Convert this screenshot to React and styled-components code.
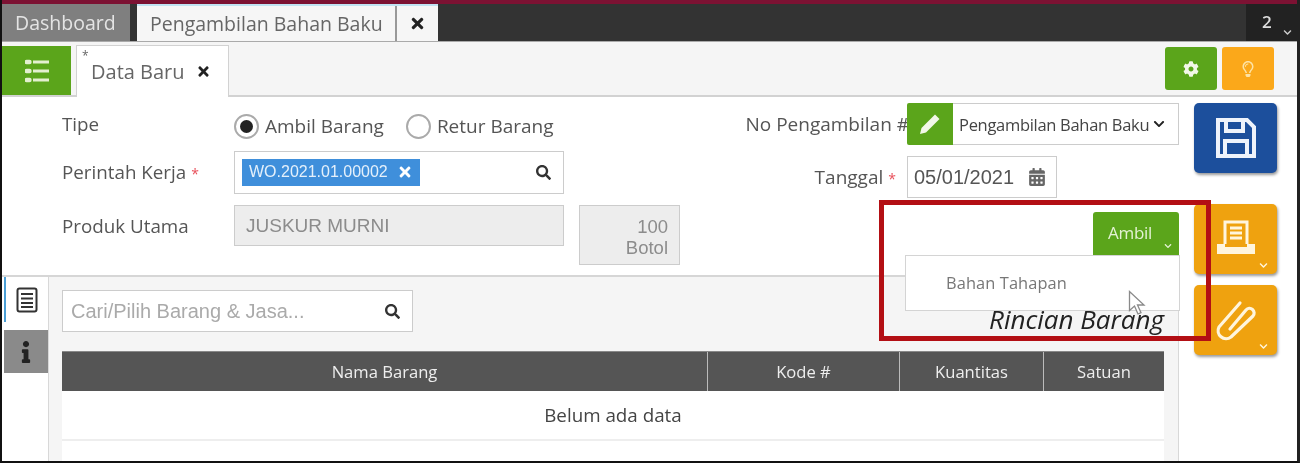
import React from 'react';
import styled, { createGlobalStyle } from 'styled-components';
import { FaTimes, FaCog, FaRegLightbulb, FaSearch, FaCalendarAlt, FaChevronDown, FaInfo } from 'react-icons/fa';

const GlobalStyle = createGlobalStyle`
  html, body { margin: 0; padding: 0; background: #fff; }
  * { box-sizing: border-box; }
`;

const Frame = styled.div`
  position: relative;
  width: 1300px;
  height: 463px;
  overflow: hidden;
  background: #fff;
  border-left: 2px solid #111;
  border-right: 3px solid #222;
  border-bottom: 2px solid #111;
  font-family: "Open Sans", "Noto Sans", sans-serif;
  color: #555;
  filter: blur(0.6px);
`;

const TopStrip = styled.div`
  height: 4px;
  background: #7c1233;
`;

const TabBar = styled.div`
  display: flex;
  height: 38px;
  background: #333;
  border-bottom: 1px solid #aaa;
`;

const DashTab = styled.div`
  width: 128px;
  background: #7f7f7f;
  color: #e4e4e4;
  font-size: 19.500px;
  padding: 5px 0 0 13px;
  white-space: nowrap;
`;

const PageTab = styled.div`
  display: flex;
  margin-left: 7px;
  background: #f6f6f6;
  border-top: 2px solid #bfe3f2;
`;

const PageTabTitle = styled.div`
  width: 260px;
  padding: 4px 0 0 13px;
  font-size: 19.500px;
  color: #666;
  border-right: 2px solid #999;
  white-space: nowrap;
`;

const PageTabClose = styled.div`
  width: 41px;
  display: flex;
  align-items: center;
  justify-content: center;
  color: #222;
  font-size: 17px;
`;

const Counter = styled.div`
  margin-left: auto;
  width: 51px;
  background: #222;
  color: #ddd;
  font-size: 17px;
  font-weight: 600;
  padding: 6px 0 0 16px;
  position: relative;
`;

const CounterCaret = styled.span`
  position: absolute;
  right: 5px;
  bottom: 1px;
  font-size: 9px;
  color: #ccc;
`;

const Toolbar = styled.div`
  display: flex;
  align-items: flex-end;
  height: 55px;
  background: #f5f5f5;
  border-bottom: 2px solid #d2d2d2;
`;

const MenuButton = styled.div`
  width: 69px;
  height: 49px;
  background: #5ba51b;
  display: flex;
  align-items: center;
  justify-content: center;
`;

const DocTab = styled.div`
  position: relative;
  display: flex;
  align-items: center;
  width: 153px;
  height: 52px;
  margin: 0 0 -2px 5px;
  padding: 0 0 0 14px;
  gap: 11px;
  background: #fff;
  border: 1px solid #d2d2d2;
  border-bottom: none;
  font-size: 20px;
  color: #666;
  white-space: nowrap;
`;

const DocStar = styled.span`
  position: absolute;
  left: 5px;
  top: 1px;
  font-size: 12px;
`;

const DocClose = styled.span`
  display: flex;
  color: #222;
  font-size: 15px;
`;

const ToolActions = styled.div`
  display: flex;
  gap: 5px;
  margin: 0 23px 5px auto;
`;

const ToolButton = styled.div`
  width: 52px;
  height: 43px;
  border-radius: 3px;
  background: ${p => p.$bg};
  color: ${p => p.$fg};
  font-size: 16px;
  display: flex;
  align-items: center;
  justify-content: center;
`;

const Body = styled.div`
  display: flex;
  height: 364px;
`;

const Main = styled.div`
  width: 1177px;
  display: flex;
  flex-direction: column;
`;

const Form = styled.div`
  height: 178px;
  flex: none;
  display: flex;
  justify-content: space-between;
  padding: 6px 0 0 60px;
`;

const FormLeft = styled.div`
  width: 620px;
  display: flex;
  flex-direction: column;
`;

const FormRow = styled.div`
  display: flex;
  align-items: ${p => p.$top ? 'flex-start' : 'center'};
  height: ${p => p.$h}px;
  margin-bottom: ${p => p.$mb || 0}px;
`;

const Label = styled.div`
  width: 172px;
  flex: none;
  font-size: 18.800px;
  color: #555;
  white-space: nowrap;
  ${p => p.$pt !== undefined && `padding-top: ${p.$pt}px;`}
  ${p => p.$pb && `padding-bottom: ${p.$pb}px;`}
`;

const Req = styled.span`
  color: #e8505b;
  font-size: 14px;
  margin-left: 5px;
`;

const RadioGroup = styled.label`
  display: flex;
  align-items: center;
  gap: 6px;
  font-size: 19px;
  color: #555;
  margin-right: 22px;
  white-space: nowrap;
`;

const RadioDot = styled.span`
  width: 25px;
  height: 25px;
  border-radius: 50%;
  background: #fff;
  border: 2px solid #aaa;
  display: flex;
  align-items: center;
  justify-content: center;
  &::after {
    content: '';
    width: 13px;
    height: 13px;
    border-radius: 50%;
    background: ${p => p.$on ? '#222' : 'transparent'};
  }
`;

const InputBox = styled.div`
  display: flex;
  align-items: center;
  width: ${p => p.$w}px;
  height: ${p => p.$h}px;
  border: 1px solid #ccc;
  background: ${p => p.$muted ? '#ededed' : '#fff'};
  color: ${p => p.$muted ? '#8c8c8c' : '#555'};
  font-family: "Liberation Sans", Arial, sans-serif;
  font-size: 19px;
  padding: ${p => p.$pad || '0 11px'};
  flex: none;
`;

const Chip = styled.div`
  display: flex;
  align-items: center;
  gap: 9px;
  height: 27px;
  padding: 0 7px;
  background: #3f8fdb;
  color: #e4f0fb;
  font-size: 16px;
  white-space: nowrap;
`;

const ChipClose = styled.span`
  display: flex;
  font-size: 16px;
  color: #fff;
`;

const SearchIcon = styled.span`
  display: flex;
  margin-left: auto;
  font-size: 15px;
  color: #333;
`;

const QtyBox = styled.div`
  width: 101px;
  height: 60px;
  margin-left: 15px;
  padding: 10px 11px 0 0;
  border: 1px solid #ccc;
  background: #ededed;
  color: #8c8c8c;
  font-family: "Liberation Sans", Arial, sans-serif;
  font-size: 18.500px;
  line-height: 21px;
  text-align: right;
`;

const FormRight = styled.div`
  position: relative;
  width: 445px;
  display: flex;
  flex-direction: column;
  align-items: flex-end;
`;

const RightRow = styled.div`
  display: flex;
  align-items: center;
  width: 100%;
  justify-content: flex-end;
  margin-bottom: ${p => p.$mb || 0}px;
`;

const RightLabel = styled.div`
  font-size: 19px;
  color: #555;
  white-space: nowrap;
  margin-right: ${p => p.$mr || 0}px;
`;

const EditButton = styled.div`
  width: 46px;
  height: 42px;
  margin-left: -2px;
  flex: none;
  border-radius: 2px 0 0 2px;
  background: #5ba51b;
  display: flex;
  align-items: center;
  justify-content: center;
`;

const SelectBox = styled.div`
  display: flex;
  align-items: center;
  gap: 4px;
  width: 226px;
  height: 42px;
  padding-left: 6px;
  border: 1px solid #ccc;
  border-left: none;
  background: #fff;
  font-size: 16.500px;
  letter-spacing: -0.3px;
  color: #444;
  white-space: nowrap;
`;

const SelectCaret = styled.span`
  display: flex;
  font-size: 12px;
  color: #222;
`;

const DateBox = styled.div`
  display: flex;
  align-items: center;
  gap: 14px;
  width: 150px;
  height: 42px;
  margin-right: 122px;
  padding-left: 6px;
  border: 1px solid #ccc;
  background: #fff;
  font-family: "Liberation Sans", Arial, sans-serif;
  font-size: 20px;
  color: #555;
`;

const DateIcon = styled.span`
  display: flex;
  font-size: 18px;
  color: #666;
`;

const AmbilButton = styled.div`
  position: relative;
  width: 86px;
  height: 43px;
  border-radius: 3px 3px 0 0;
  background: #5ba51b;
  color: #e4f2d4;
  font-size: 17px;
  letter-spacing: -0.3px;
  padding: 9px 0 0 15px;
`;

const Caret = styled.span`
  position: absolute;
  right: ${p => p.$r}px;
  bottom: ${p => p.$b}px;
  display: flex;
  font-size: ${p => p.$s}px;
  color: ${p => p.$c};
`;

const Dropdown = styled.div`
  position: absolute;
  z-index: 3;
  right: -1px;
  top: 152px;
  width: 275px;
  height: 56px;
  padding: 15px 0 0 40px;
  background: #fff;
  border: 1px solid #d4d4d4;
  font-size: 16.400px;
  letter-spacing: 0.1px;
  color: #777;
`;

const Cursor = styled.svg`
  position: absolute;
  left: 222px;
  top: 34px;
  width: 18px;
  height: 26px;
`;

const Section = styled.div`
  flex: 1;
  display: flex;
  border-top: 2px solid #d6d6d6;
`;

const SideTabs = styled.div`
  width: 46px;
  flex: none;
  display: flex;
  flex-direction: column;
  padding-left: 2px;
  background: #fff;
`;

const InfoTab = styled.div`
  width: 44px;
  height: ${p => p.$h}px;
  margin-bottom: ${p => p.$mb || 0}px;
  display: flex;
  align-items: center;
  justify-content: center;
  background: ${p => p.$active ? '#fff' : '#8a8a8a'};
  border-left: ${p => p.$active ? '2px solid #4a9fd6' : 'none'};
  color: #222;
  font-size: 22px;
`;

const Panel = styled.div`
  flex: 1;
  background: #f5f5f5;
  border-left: 1px solid #d8d8d8;
  border-right: 1px solid #d8d8d8;
  padding: 13px 14px 0 13px;
`;

const PanelHead = styled.div`
  display: flex;
  justify-content: space-between;
  align-items: flex-end;
  height: 42px;
  margin-bottom: 19px;
`;

const RincianTitle = styled.div`
  font-size: 26px;
  line-height: 30px;
  font-style: italic;
  color: #222;
  margin-bottom: -2px;
  white-space: nowrap;
`;

const Placeholder = styled.span`
  color: #aaa;
  font-size: 20px;
  white-space: nowrap;
`;

const Table = styled.div`
  background: #fff;
  height: 200px;
`;

const HeadRow = styled.div`
  display: grid;
  grid-template-columns: 645px 192px 144px 121px;
  height: 40px;
  background: #555;
  border-top: 1px solid #888;
`;

const HeadCell = styled.div`
  display: flex;
  align-items: center;
  justify-content: center;
  color: #eee;
  font-size: 16.600px;
  border-left: ${p => p.$first ? 'none' : '1px solid #bbb'};
`;

const EmptyRow = styled.div`
  height: 50px;
  display: flex;
  align-items: center;
  justify-content: center;
  font-size: 18.800px;
  color: #444;
  border-bottom: 2px solid #eee;
`;

const SideRail = styled.div`
  flex: 1;
  display: flex;
  flex-direction: column;
  padding: 6px 0 0 15px;
`;

const RailButton = styled.div`
  position: relative;
  width: 83px;
  height: 70px;
  margin-bottom: ${p => p.$mb}px;
  border-radius: 5px;
  background: ${p => p.$bg};
  box-shadow: 1px 2px 3px rgba(0, 0, 0, 0.4);
  color: #fff5dd;
  display: flex;
  align-items: center;
  justify-content: center;
`;

const RedBox = styled.div`
  position: absolute;
  z-index: 5;
  left: 877px;
  top: 200px;
  width: 332px;
  height: 141px;
  border: 5px solid #b30f14;
  pointer-events: none;
`;

function ListIcon() {
  return (
    <svg width="24" height="24" viewBox="0 0 24 24" fill="none" stroke="#e3efcf" strokeWidth="3">
      <path d="M8 3h16M8 12h16M8 21h16" />
      <path d="M1.500 3h3M1.500 12h3M1.500 21h3" strokeWidth="4.400" strokeLinecap="round" />
    </svg>
  );
}

function PencilIcon() {
  return (
    <svg width="22" height="22" viewBox="0 0 22 22" fill="#f2f7e8">
      <path d="M16 1.500l4.500 4.500L7 19.500 1 21l1.500-6z" />
    </svg>
  );
}

function FloppyIcon() {
  return (
    <svg width="42" height="42" viewBox="0 0 42 42" fill="none" stroke="#eef3fb" strokeWidth="4">
      <path d="M3 3h29l7 7v29H3z" />
      <path d="M11 3v11h17V3" />
      <path d="M10 39V24h22v15" />
    </svg>
  );
}

function DocIcon() {
  return (
    <svg width="22" height="26" viewBox="0 0 22 26" fill="none" stroke="#333" strokeWidth="2">
      <rect x="1.500" y="1.500" width="19" height="23" rx="2" />
      <path d="M5 7h12M5 11.500h12M5 16h12M5 20h12" />
    </svg>
  );
}

function TrayIcon() {
  return (
    <svg width="42" height="38" viewBox="0 0 42 38" fill="none" stroke="#fff5dd" strokeWidth="3">
      <path d="M10 24V2h22v22" />
      <path d="M15 8h12M15 13h12M15 18h12" />
      <path d="M2 24h8v3h22v-3h8v10H2z" fill="#fff5dd" strokeWidth="0" />
    </svg>
  );
}

function ClipIcon() {
  return (
    <svg width="42" height="44" viewBox="0 0 42 44" fill="none" stroke="#fff5dd" strokeWidth="3.200" strokeLinecap="round" strokeLinejoin="round">
      <path d="M15 31 31 12a4.500 4.500 0 0 1 7 6L16 39a8 8 0 0 1-12-10L25 5" />
    </svg>
  );
}

export default function App() {
  return (
    <>
      <GlobalStyle />
      <Frame>
        <TopStrip />
        <TabBar>
          <DashTab>Dashboard</DashTab>
          <PageTab>
            <PageTabTitle>Pengambilan Bahan Baku</PageTabTitle>
            <PageTabClose><FaTimes /></PageTabClose>
          </PageTab>
          <Counter>2<CounterCaret><FaChevronDown /></CounterCaret></Counter>
        </TabBar>
        <Toolbar>
          <MenuButton><ListIcon /></MenuButton>
          <DocTab>
            <DocStar>*</DocStar>
            Data Baru
            <DocClose><FaTimes /></DocClose>
          </DocTab>
          <ToolActions>
            <ToolButton $bg="#5ba51b" $fg="#f2f7e8"><FaCog /></ToolButton>
            <ToolButton $bg="#fba81a" $fg="#fde3a6"><FaRegLightbulb /></ToolButton>
          </ToolActions>
        </Toolbar>
        <Body>
          <Main>
            <Form>
              <FormLeft>
                <FormRow $h={46} $mb={2}>
                  <Label $pb={5}>Tipe</Label>
                  <RadioGroup><RadioDot $on />Ambil Barang</RadioGroup>
                  <RadioGroup><RadioDot />Retur Barang</RadioGroup>
                </FormRow>
                <FormRow $h={42} $mb={12}>
                  <Label>Perintah Kerja<Req>*</Req></Label>
                  <InputBox $w={330} $h={43} $pad="0 12px 0 7px">
                    <Chip>WO.2021.01.00002<ChipClose><FaTimes /></ChipClose></Chip>
                    <SearchIcon><FaSearch /></SearchIcon>
                  </InputBox>
                </FormRow>
                <FormRow $h={60} $top>
                  <Label $pt={8}>Produk Utama</Label>
                  <InputBox $w={330} $h={41} $muted>JUSKUR MURNI</InputBox>
                  <QtyBox>100<br />Botol</QtyBox>
                </FormRow>
              </FormLeft>
              <FormRight>
                <RightRow $mb={11}>
                  <RightLabel>No Pengambilan #</RightLabel>
                  <EditButton><PencilIcon /></EditButton>
                  <SelectBox>Pengambilan Bahan Baku<SelectCaret><FaChevronDown /></SelectCaret></SelectBox>
                </RightRow>
                <RightRow $mb={14}>
                  <RightLabel $mr={11}>Tanggal<Req>*</Req></RightLabel>
                  <DateBox>05/01/2021<DateIcon><FaCalendarAlt /></DateIcon></DateBox>
                </RightRow>
                <AmbilButton>
                  Ambil
                  <Caret $r={7} $b={5} $s={8} $c="#e4f2d4"><FaChevronDown /></Caret>
                </AmbilButton>
                <Dropdown>
                  Bahan Tahapan
                  <Cursor viewBox="0 0 18 26">
                    <path d="M1.500 1.500v19l5-4.500 3.500 8 3-1.300-3.500-7.700h6.500z" fill="#fff" stroke="#8a8a8a" strokeWidth="1.300" />
                  </Cursor>
                </Dropdown>
              </FormRight>
            </Form>
            <Section>
              <SideTabs>
                <InfoTab $active $h={45} $mb={8}><DocIcon /></InfoTab>
                <InfoTab $h={43}><FaInfo /></InfoTab>
              </SideTabs>
              <Panel>
                <PanelHead>
                  <InputBox $w={351} $h={42} $pad="0 12px 0 8px">
                    <Placeholder>Cari/Pilih Barang &amp; Jasa...</Placeholder>
                    <SearchIcon><FaSearch /></SearchIcon>
                  </InputBox>
                  <RincianTitle>Rincian Barang</RincianTitle>
                </PanelHead>
                <Table>
                  <HeadRow>
                    <HeadCell $first>Nama Barang</HeadCell>
                    <HeadCell>Kode #</HeadCell>
                    <HeadCell>Kuantitas</HeadCell>
                    <HeadCell>Satuan</HeadCell>
                  </HeadRow>
                  <EmptyRow>Belum ada data</EmptyRow>
                </Table>
              </Panel>
            </Section>
          </Main>
          <SideRail>
            <RailButton $bg="#1c4f9c" $mb={31}><FloppyIcon /></RailButton>
            <RailButton $bg="#efa20f" $mb={11}>
              <TrayIcon />
              <Caret $r={9} $b={4} $s={9} $c="#fff5dd"><FaChevronDown /></Caret>
            </RailButton>
            <RailButton $bg="#efa20f" $mb={0}>
              <ClipIcon />
              <Caret $r={9} $b={4} $s={9} $c="#fff5dd"><FaChevronDown /></Caret>
            </RailButton>
          </SideRail>
        </Body>
        <RedBox />
      </Frame>
    </>
  );
}
